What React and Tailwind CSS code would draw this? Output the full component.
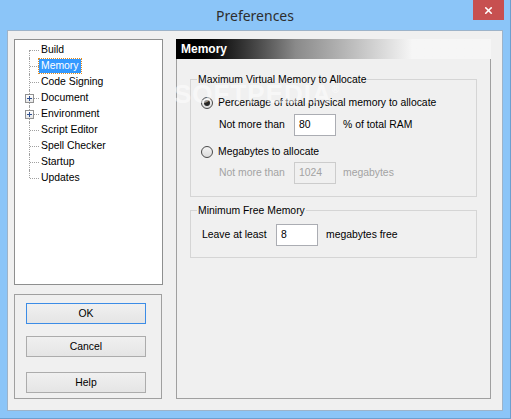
import { X } from "lucide-react";

const font = { fontFamily: '"Liberation Sans", Arial, sans-serif' };

const treeItems = [
  { label: "Build" },
  { label: "Memory", selected: true },
  { label: "Code Signing" },
  { label: "Document", expandable: true },
  { label: "Environment", expandable: true },
  { label: "Script Editor" },
  { label: "Spell Checker" },
  { label: "Startup" },
  { label: "Updates" },
];

const TreeRow = ({ item, first, last }) => (
  <div className="relative flex h-[16px] items-center">
    {/* vertical connector */}
    <span
      className={`absolute left-[14px] w-0 border-l border-dotted border-[#a0a0a0] ${
        first ? "top-[8px] bottom-0" : last ? "top-0 h-[8px]" : "top-0 bottom-0"
      }`}
    />
    {/* horizontal connector */}
    <span className="absolute left-[15px] top-[8px] w-[9px] border-t border-dotted border-[#a0a0a0]" />
    {item.expandable && (
      <span className="absolute left-[10px] top-[4px] flex h-[9px] w-[9px] items-center justify-center border border-[#919191] bg-gradient-to-b from-white to-[#e6e6e6]">
        <span className="relative block h-[5px] w-[5px]">
          <span className="absolute left-0 top-[2px] h-[1px] w-[5px] bg-[#2f4f8f]" />
          <span className="absolute left-[2px] top-0 h-[5px] w-[1px] bg-[#2f4f8f]" />
        </span>
      </span>
    )}
    <span
      className={`ml-[24px] px-[2px] text-[10.4px] leading-[14px] ${
        item.selected
          ? "bg-[#3399ff] text-white outline outline-1 outline-dotted outline-[#e08a1e]"
          : "text-black"
      }`}
    >
      {item.label}
    </span>
  </div>
);

const Radio = ({ checked }) => (
  <span className="flex h-[12px] w-[12px] items-center justify-center rounded-full border border-[#4a4a4a] bg-gradient-to-b from-[#f4f4f4] to-[#dcdcdc]">
    {checked && <span className="h-[6px] w-[6px] rounded-full bg-[#262626]" />}
  </span>
);

const Button = ({ children, primary, className = "" }) => (
  <button
    className={`block h-[21px] w-[120px] border bg-gradient-to-b from-[#f0f0f0] to-[#e5e5e5] text-[10.4px] text-black ${
      primary ? "border-[#3c8ce6]" : "border-[#acacac]"
    } ${className}`}
  >
    {children}
  </button>
);

export default function App() {
  return (
    <div className="h-[419px] w-[511px] border-r border-b border-[#6d9fcf] bg-[#8bc5f8]" style={font}>
      {/* Title bar */}
      <div className="relative flex h-[30px] items-center justify-center">
        <span
          className="text-[14px] text-[#2e2e2e]"
          style={{ fontFamily: '"Noto Sans", "Open Sans", sans-serif' }}
        >
          Preferences
        </span>
        <div className="absolute right-[6px] top-0 flex h-[20px] w-[31px] items-center justify-center bg-[#c75050]">
          <X size={11} strokeWidth={3.5} color="white" />
        </div>
      </div>

      {/* Client area */}
      <div className="relative ml-[7px] flex h-[381px] w-[496px] gap-[13px] border border-[#9db3c9] bg-[#f0f0f0] pl-[6px] pt-[8px]">
        {/* watermark */}
        <span className="pointer-events-none absolute left-[166px] top-[44px] select-none text-[26px] font-bold tracking-[1px] text-white opacity-50">
          SOFTPEDIA<span className="align-super text-[10px]">®</span>
        </span>

        {/* Left column */}
        <div className="flex flex-col gap-[9px]">
          <div className="h-[246px] w-[149px] border border-[#8e8f8f] bg-white pt-[2px]">
            {treeItems.map((item, i) => (
              <TreeRow
                key={item.label}
                item={item}
                first={i === 0}
                last={i === treeItems.length - 1}
              />
            ))}
          </div>
          <div className="flex h-[105px] w-[148px] flex-col border border-[#a0a0a0] pl-[11px] pt-[8px]">
            <Button primary>OK</Button>
            <Button className="mt-[12px]">Cancel</Button>
            <Button className="mt-[15px]">Help</Button>
          </div>
        </div>

        {/* Right column */}
        <div className="w-[315px] text-[10.4px]">
          <div className="flex h-[20px] items-center bg-gradient-to-r from-black from-[4%] via-[#8a8a8a] via-[38%] to-[#f6f6f6] to-[75%] pl-[5px]">
            <span className="text-[12px] font-bold text-white">Memory</span>
          </div>
          <div className="h-[340px] border-x border-b border-[#a0a0a0] pl-[13px] pt-[14px]">
            <fieldset className="h-[124px] w-[287px] border border-[#d5d5d5]">
              <legend className="ml-[6px] px-[1px] leading-[13px] text-black">
                Maximum Virtual Memory to Allocate
              </legend>
              <div className="mt-[9px] flex h-[16px] items-center text-black">
                <span className="ml-[10px]">
                  <Radio checked />
                </span>
                <span className="ml-[5px]">Percentage of total physical memory to allocate</span>
              </div>
              <div className="mt-[3px] flex h-[22px] items-center text-black">
                <span className="ml-[28px] w-[75px]">Not more than</span>
                <span className="flex h-[22px] w-[42px] items-center border border-[#abadb3] bg-white pl-[4px]">80</span>
                <span className="ml-[7px]">% of total RAM</span>
              </div>
              <div className="mt-[8px] flex h-[16px] items-center text-black">
                <span className="ml-[10px]">
                  <Radio />
                </span>
                <span className="ml-[5px]">Megabytes to allocate</span>
              </div>
              <div className="mt-[2px] flex h-[22px] items-center text-[#a3a3a3]">
                <span className="ml-[28px] w-[75px]">Not more than</span>
                <span className="flex h-[22px] w-[42px] items-center border border-[#cccccc] bg-[#f0f0f0] pl-[4px]">1024</span>
                <span className="ml-[7px]">megabytes</span>
              </div>
            </fieldset>

            <fieldset className="mt-[7px] h-[54px] w-[287px] border border-[#d5d5d5]">
              <legend className="ml-[6px] px-[1px] leading-[13px] text-black">
                Minimum Free Memory
              </legend>
              <div className="mt-[7px] flex h-[22px] items-center text-black">
                <span className="ml-[11px] w-[74px]">Leave at least</span>
                <span className="flex h-[22px] w-[42px] items-center border border-[#abadb3] bg-white pl-[4px]">8</span>
                <span className="ml-[8px]">megabytes free</span>
              </div>
            </fieldset>
          </div>
        </div>
      </div>
    </div>
  );
}
